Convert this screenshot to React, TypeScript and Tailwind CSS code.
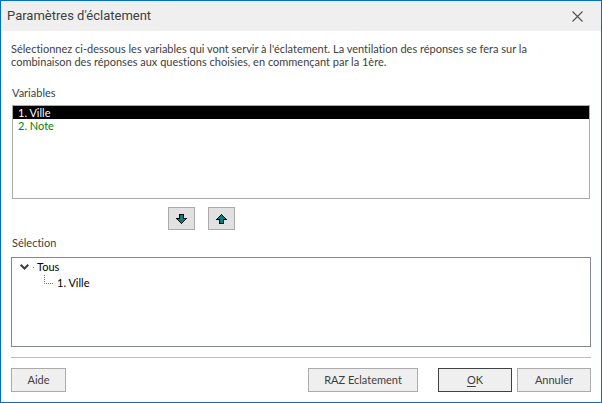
import { useState } from 'react'
import clsx from 'clsx'

const VARIABLES = ['1. Ville', '2. Note']

const BUTTON = 'h-6 border bg-[#efefef] text-center leading-[22px]'

// Small teal arrow, drawn on an 11x10 pixel grid
function ArrowIcon({ up }: { up?: boolean }) {
  return (
    <svg
      width="11"
      height="10"
      viewBox="0 0 11 10"
      shapeRendering="crispEdges"
      className={clsx('block', up && 'rotate-180')}
      aria-hidden="true"
    >
      <path
        fill="#000"
        d="M3 0h5v4h3v1h-1v1h-1v1h-1v1h-1v1h-1v1h-1v-1h-1v-1h-1v-1h-1v-1h-1v-1h-1v-1h3z"
      />
      <path fill="#008080" d="M4 1h3v4h2v1h-1v1h-1v1h-1v1h-1v-1h-1v-1h-1v-1h-1v-1h2z" />
    </svg>
  )
}

export default function App() {
  const [active, setActive] = useState(0)
  const [open, setOpen] = useState(true)

  return (
    <div className="flex min-h-screen flex-col border border-[#0070c0] bg-white font-['Lato',sans-serif] text-[11px] leading-[13px] text-[#404040] [font-variant-ligatures:none]">
      <header className="flex h-[30px] shrink-0 items-center justify-between bg-[#efefef] pr-[18px] pl-1.5">
        <h1 className="font-['Roboto',sans-serif] text-[13px] leading-4">Paramètres d'éclatement</h1>
        <button type="button" aria-label="Fermer">
          <svg width="11" height="11" viewBox="0 0 11 11" className="block" aria-hidden="true">
            <path d="M0.5 0.5l10 10M10.5 0.5l-10 10" stroke="#505050" strokeWidth="1.1" />
          </svg>
        </button>
      </header>

      <main className="flex grow flex-col px-2.5 pt-[11px] pb-2.5">
        <p className="pr-8">
          Sélectionnez ci-dessous les variables qui vont servir à l'éclatement. La ventilation des réponses se fera sur la
          <br />
          combinaison des réponses aux questions choisies, en commençant par la 1ère.
        </p>

        <h2 id="variables" className="mt-[18px] ml-px">
          Variables
        </h2>
        <div
          role="listbox"
          aria-labelledby="variables"
          className="mt-1.5 mr-px ml-px flex h-[94px] flex-col border border-[#ababab]"
        >
          {VARIABLES.map((name, i) => (
            <button
              key={name}
              type="button"
              role="option"
              aria-selected={i === active}
              onClick={() => setActive(i)}
              className={clsx('px-[5px] text-left', i === active ? 'bg-black text-white' : 'text-[#008000]')}
            >
              {name}
            </button>
          ))}
        </div>

        <div className="mt-2 ml-[157px] flex gap-[13px]">
          <button
            type="button"
            aria-label="Ajouter"
            className="flex h-[23px] w-[27px] items-center justify-center border border-[#ababab] bg-[#e1e1e1]"
          >
            <ArrowIcon />
          </button>
          <button
            type="button"
            aria-label="Retirer"
            className="flex h-[23px] w-[27px] items-center justify-center border border-[#ababab] bg-[#e1e1e1]"
          >
            <ArrowIcon up />
          </button>
        </div>

        <h2 id="selection" className="mt-1.5 ml-px">
          Sélection
        </h2>
        <div
          role="tree"
          aria-labelledby="selection"
          className="mt-2 min-h-[90px] grow border border-[#828790] pt-px leading-4 text-black"
        >
          <div role="treeitem" aria-expanded={open}>
            <div className="flex items-center pl-2">
              <button type="button" aria-label="Développer" onClick={() => setOpen(!open)}>
                <svg width="9" height="6" viewBox="0 0 9 6" className="block" aria-hidden="true">
                  <path d="M0.7 0.7l3.8 3.8 3.8-3.8" fill="none" stroke="#404040" strokeWidth="2" />
                </svg>
              </button>
              <span className="mr-[3px] ml-1 size-px bg-[#808080]" />
              Tous
            </div>
            {open && (
              <div role="group">
                <div role="treeitem" className="flex pl-8">
                  <svg width="10" height="9" viewBox="0 0 10 9" shapeRendering="crispEdges" aria-hidden="true">
                    <path d="M0.5 0v9M0 8.5h10" stroke="#808080" strokeDasharray="1 1" />
                  </svg>
                  <span className="ml-[3px]">1. Ville</span>
                </div>
              </div>
            )}
          </div>
        </div>

        <hr className="mt-2.5 border-[#bcbcbc]" />

        <footer className="mt-2.5 flex">
          <button type="button" className={clsx(BUTTON, 'w-[55px] border-[#ababab]')}>
            Aide
          </button>
          <button type="button" className={clsx(BUTTON, 'mr-5 ml-auto w-[110px] border-[#ababab]')}>
            RAZ Eclatement
          </button>
          <button type="button" className={clsx(BUTTON, 'mr-[5px] w-[74px] border-[#404040]')}>
            <span className="underline underline-offset-2">O</span>K
          </button>
          <button type="button" className={clsx(BUTTON, 'w-[74px] border-[#ababab]')}>
            Annuler
          </button>
        </footer>
      </main>
    </div>
  )
}
